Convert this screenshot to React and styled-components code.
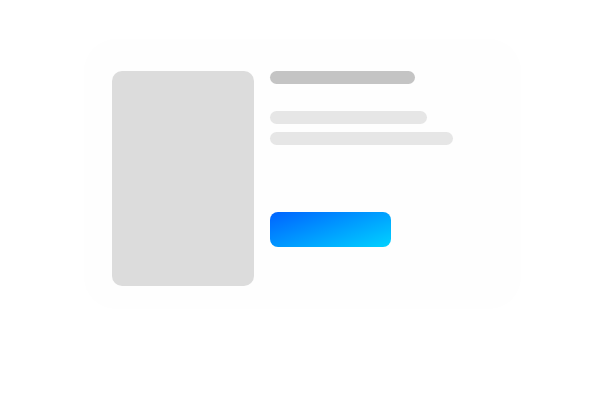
import React from "react";
import styled, { createGlobalStyle } from "styled-components";

const Global = createGlobalStyle`
  html, body { margin: 0; padding: 0; background: #ffffff; font-family: "Inter", sans-serif; }
  body { width: 600px; height: 400px; overflow: hidden; }
`;

const Page = styled.div`
  padding: 39px 0 0 84px;
`;

const Card = styled.div`
  width: 437px;
  height: 270px;
  box-sizing: border-box;
  padding: 32px 28px 23px 28px;
  background: #fefefe;
  border-radius: 32px;
  display: flex;
  gap: 16px;
`;

const Thumb = styled.div`
  width: 142px;
  height: 215px;
  border-radius: 10px;
  background: #dcdcdc;
  flex-shrink: 0;
`;

const Body = styled.div`
  display: flex;
  flex-direction: column;
`;

const Bar = styled.div`
  width: ${(p) => p.$w}px;
  height: 13px;
  border-radius: 7px;
  background: ${(p) => p.$c};
  margin-top: ${(p) => p.$mt || 0}px;
`;

const Button = styled.div`
  margin-top: 67px;
  width: 121px;
  height: 35px;
  border-radius: 8px;
  background: linear-gradient(160deg, #0063ff 0%, #00a0ff 55%, #00d2ff 100%);
`;

export default function App() {
  return (
    <>
      <Global />
      <Page>
        <Card>
          <Thumb />
          <Body>
            <Bar $w={145} $c="#c4c4c4" />
            <Bar $w={157} $c="#e6e6e6" $mt={27} />
            <Bar $w={183} $c="#e6e6e6" $mt={8} />
            <Button />
          </Body>
        </Card>
      </Page>
    </>
  );
}
